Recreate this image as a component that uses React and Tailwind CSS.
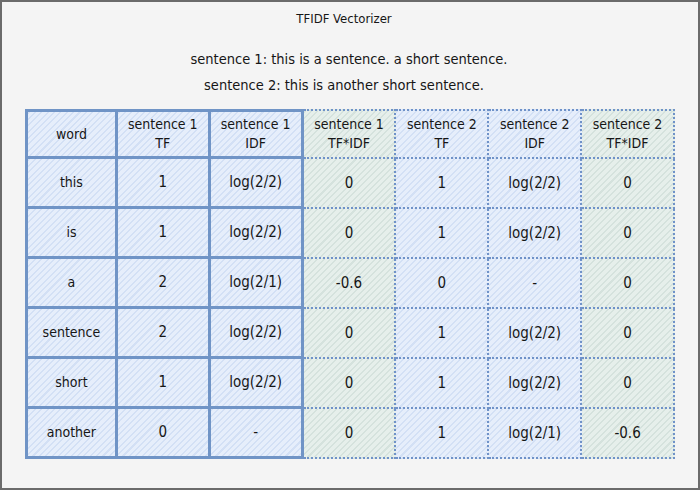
import React from "react";

const cols = ["word", "sentence 1\nTF", "sentence 1\nIDF", "sentence 1\nTF*IDF", "sentence 2\nTF", "sentence 2\nIDF", "sentence 2\nTF*IDF"];
const rows = [
  ["this", "1", "log(2/2)", "0", "1", "log(2/2)", "0"],
  ["is", "1", "log(2/2)", "0", "1", "log(2/2)", "0"],
  ["a", "2", "log(2/1)", "-0.6", "0", "-", "0"],
  ["sentence", "2", "log(2/2)", "0", "1", "log(2/2)", "0"],
  ["short", "1", "log(2/2)", "0", "1", "log(2/2)", "0"],
  ["another", "0", "-", "0", "1", "log(2/1)", "-0.6"],
];

const blue = "bg-[repeating-linear-gradient(135deg,#d3e0f5_0px,#d3e0f5_1.5px,#e6eefb_1.5px,#e6eefb_4.5px)]";
const green = "bg-[repeating-linear-gradient(135deg,#d5e2dd_0px,#d5e2dd_1.5px,#e6efeb_1.5px,#e6efeb_4.5px)]";

function cellClass(c, r) {
  const solid = c < 3;
  const fill = c === 3 || c === 6 ? green : blue;
  const border = solid
    ? "border-solid border-[#7094c6] border-r-[3px] border-b-[3px]"
    : "border-dotted border-[#6f92c8] border-r-2 border-b-2";
  const top = r === 0 ? (solid ? "border-t-[3px]" : "border-t-2") : "";
  const left = c === 0 ? "border-l-[3px]" : "";
  const text = r > 0 && c > 0 ? "text-[15px]" : "text-[14px]";
  return `${fill} ${border} ${top} ${left} ${text} flex items-center justify-center text-center h-[50px] whitespace-pre-line leading-[19px]`;
}

export default function App() {
  return (
    <div className="w-[700px] h-[490px] bg-[#f4f4f4] border-2 border-[#6b6b6b] text-[#161616] text-[14px] [font-family:'DejaVu_Sans',sans-serif] [font-stretch:condensed] flex flex-col items-center">
      <div className="mt-[7px] h-[20px] leading-[20px] text-[13px] ml-[-12px]">TFIDF Vectorizer</div>
      <div className="mt-[17px] h-[26px] leading-[26px] text-[14.5px] ml-[-2px]">sentence 1: this is a sentence. a short sentence.</div>
      <div className="h-[26px] leading-[26px] text-[14.5px] ml-[-12px]">sentence 2: this is another short sentence.</div>
      <div className="self-start ml-[23px] mt-[11px] w-[650px] grid grid-cols-7">
        {cols.map((h, c) => (
          <div key={"h" + c} className={cellClass(c, 0)}>{h}</div>
        ))}
        {rows.map((row, r) =>
          row.map((v, c) => (
            <div key={r + "-" + c} className={cellClass(c, r + 1)}>{v}</div>
          ))
        )}
      </div>
    </div>
  );
}
